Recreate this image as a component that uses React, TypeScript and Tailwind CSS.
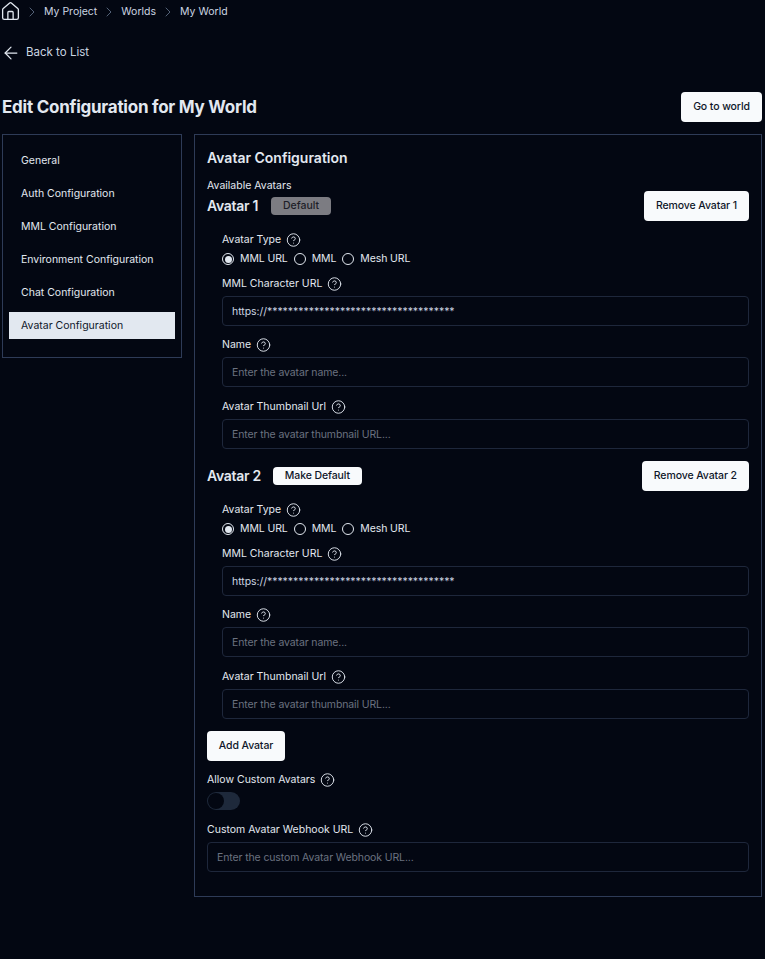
import React from "react";
import { ArrowLeft, ChevronRight, CircleHelp, House } from "lucide-react";

const navItems = [
  "General",
  "Auth Configuration",
  "MML Configuration",
  "Environment Configuration",
  "Chat Configuration",
  "Avatar Configuration",
];

const Label: React.FC<{ text: string }> = ({ text }) => (
  <div className="flex h-[16px] items-center gap-[5px] text-[10.5px] leading-[16px] text-[#e2e8f0]">
    <span>{text}</span>
    <CircleHelp size={15} strokeWidth={1.5} className="-translate-y-[0.5px] text-[#e2e8f0]" />
  </div>
);

const Field: React.FC<{ value?: string; placeholder: string }> = ({ value, placeholder }) => (
  <input
    readOnly
    value={value}
    placeholder={placeholder}
    className="h-[30px] w-full rounded-[4px] border border-[#1e273b] bg-transparent px-[9px] text-[10.5px] tracking-[-0.05px] text-[#cbd5e1] outline-none placeholder:tracking-[-0.12px] placeholder:text-[#6b7280]"
  />
);

const Radio: React.FC<{ label: string; checked?: boolean }> = ({ label, checked }) => (
  <div className="flex items-center gap-[6px] text-[10.5px] tracking-[-0.1px] text-[#e2e8f0]">
    <span className="flex h-[12px] w-[12px] items-center justify-center rounded-full border border-[#e2e8f0]">
      {checked && <span className="h-[7px] w-[7px] rounded-full bg-[#e2e8f0]" />}
    </span>
    {label}
  </div>
);

const WhiteButton: React.FC<{ text: string; className?: string }> = ({ text, className }) => (
  <button className={`rounded-[4px] bg-[#f8fafc] text-[10.5px] font-medium tracking-[-0.1px] text-[#0f172a] ${className}`}>
    {text}
  </button>
);

const AvatarBlock: React.FC<{ index: number; isDefault?: boolean }> = ({ index, isDefault }) => (
  <div>
    <div className="flex items-center">
      <h3 className="text-[14px] font-semibold leading-[20px] tracking-[-0.3px] text-[#e2e8f0]">Avatar {index}</h3>
      {isDefault ? (
        <span className="ml-[13px] flex h-[18px] w-[60px] items-center justify-center rounded-[4px] bg-[#7c7c82] text-[10.5px] font-medium text-[#1e1e28]">
          Default
        </span>
      ) : (
        <WhiteButton text="Make Default" className="ml-[12px] h-[18px] w-[89px]" />
      )}
      <WhiteButton text={`Remove Avatar ${index}`} className="ml-auto h-[30px] px-[12px]" />
    </div>
    <div className="mt-[11px] pl-[15px]">
      <Label text="Avatar Type" />
      <div className="mt-[3px] flex h-[16px] items-center gap-[6px]">
        <Radio label="MML URL" checked />
        <Radio label="MML" />
        <Radio label="Mesh URL" />
      </div>
      <div className="mt-[9px]">
        <Label text="MML Character URL" />
      </div>
      <div className="mt-[4px]">
        <Field value="https://************************************" placeholder="" />
      </div>
      <div className="mt-[11px]">
        <Label text="Name" />
      </div>
      <div className="mt-[4px]">
        <Field placeholder="Enter the avatar name..." />
      </div>
      <div className="mt-[12px]">
        <Label text="Avatar Thumbnail Url" />
      </div>
      <div className="mt-[4px]">
        <Field placeholder="Enter the avatar thumbnail URL..." />
      </div>
    </div>
  </div>
);

export default function App() {
  return (
    <div className="min-h-[959px] bg-[#030712] pl-[2px] pr-[3px] font-['Inter',sans-serif] text-[#e2e8f0]">
      {/* Breadcrumb */}
      <div className="-ml-[2px] flex h-[23px] items-center text-[10.5px] text-[#cbd5e1]">
        <House size={21} strokeWidth={1.5} className="text-[#e2e8f0]" />
        <ChevronRight size={16} strokeWidth={1.25} className="ml-[3px] mr-[4px] text-[#64748b]" />
        <span>My Project</span>
        <ChevronRight size={16} strokeWidth={1.25} className="mx-[4px] text-[#64748b]" />
        <span>Worlds</span>
        <ChevronRight size={16} strokeWidth={1.25} className="mx-[4px] text-[#64748b]" />
        <span>My World</span>
      </div>

      <div className="-ml-[1px] mt-[20px] flex h-[20px] items-center gap-[5px] text-[11.5px] text-[#cbd5e1]">
        <ArrowLeft size={20} strokeWidth={1.5} className="text-[#e2e8f0]" />
        Back to List
      </div>

      <div className="mt-[29px] flex h-[30px] items-center justify-between">
        <h1 className="pt-[1px] text-[17px] font-bold tracking-[-0.25px] text-[#e2e8f0]">Edit Configuration for My World</h1>
        <WhiteButton text="Go to world" className="h-[30px] w-[81px]" />
      </div>

      <div className="mt-[12px] flex items-start gap-[12px]">
        {/* Sidebar */}
        <div className="flex w-[180px] shrink-0 flex-col gap-[6px] border border-[#2e3b57] px-[6px] pb-[18px] pt-[12px]">
          {navItems.map((item) => (
            <div
              key={item}
              className={`flex h-[27px] items-center px-[12px] text-[10.5px] ${
                item === "Avatar Configuration" ? "bg-[#e2e8f0] text-[#0f172a]" : "text-[#e2e8f0]"
              }`}
            >
              {item}
            </div>
          ))}
        </div>

        {/* Panel */}
        <div className="min-w-0 flex-1 border border-[#2e3b57] px-[12px] pb-[24px] pt-[13px]">
          <h2 className="text-[14px] font-semibold leading-[20px] text-[#e2e8f0]">Avatar Configuration</h2>
          <div className="mt-[12px] h-[11px] text-[10.5px] leading-[12px] text-[#e2e8f0]">Available Avatars</div>
          <div className="flex flex-col gap-[12px]">
            <AvatarBlock index={1} isDefault />
            <AvatarBlock index={2} />
          </div>
          <WhiteButton text="Add Avatar" className="mt-[12px] h-[30px] w-[78px]" />
          <div className="mt-[11px]">
            <Label text="Allow Custom Avatars" />
          </div>
          <div className="mt-[4px] flex h-[18px] w-[33px] items-center rounded-full bg-[#1e293b]">
            <span className="ml-[1px] h-[16px] w-[16px] rounded-full bg-[#030712]" />
          </div>
          <div className="mt-[12px]">
            <Label text="Custom Avatar Webhook URL" />
          </div>
          <div className="mt-[4px]">
            <Field placeholder="Enter the custom Avatar Webhook URL..." />
          </div>
        </div>
      </div>
    </div>
  );
}
